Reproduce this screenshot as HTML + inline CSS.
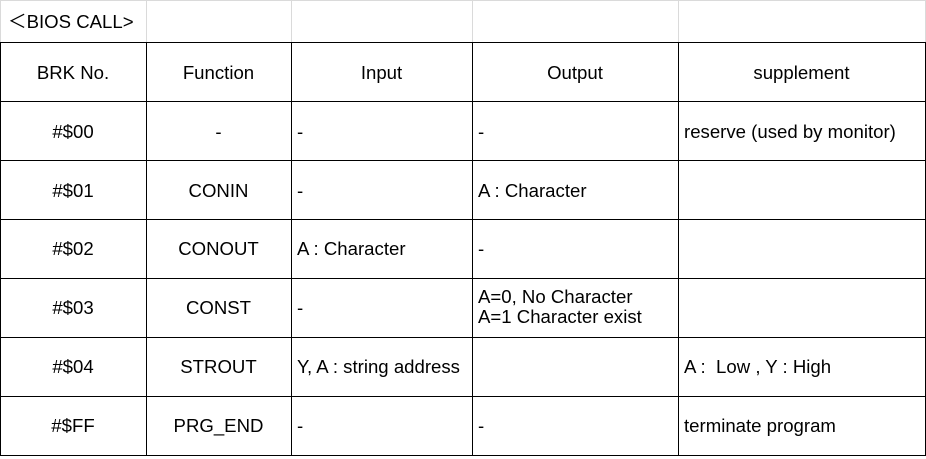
<!DOCTYPE html>
<html><head><meta charset="utf-8"><style>
body{margin:0;width:926px;height:459px;background:#fff;position:relative;overflow:hidden;font-family:"Liberation Sans","Noto Sans CJK JP",sans-serif;font-size:18.6px;color:#000}
.h{position:absolute;height:1px;background:#000}
.v{position:absolute;width:1px;background:#000}
.g{background:#dadada}
.t{position:absolute;line-height:21px;white-space:nowrap}
.c{text-align:center}
</style></head><body>
<div class="v g" style="left:0;top:0;height:43px"></div>
<div class="v g" style="left:146px;top:0;height:43px"></div>
<div class="v g" style="left:291px;top:0;height:43px"></div>
<div class="v g" style="left:472px;top:0;height:43px"></div>
<div class="v g" style="left:678px;top:0;height:43px"></div>
<div class="v g" style="left:925px;top:0;height:43px"></div>
<div class="h g" style="left:0;top:0;width:926px"></div>
<div class="h" style="left:0;top:42px;width:926px"></div>
<div class="h" style="left:0;top:101px;width:926px"></div>
<div class="h" style="left:0;top:160px;width:926px"></div>
<div class="h" style="left:0;top:219px;width:926px"></div>
<div class="h" style="left:0;top:278px;width:926px"></div>
<div class="h" style="left:0;top:337px;width:926px"></div>
<div class="h" style="left:0;top:396px;width:926px"></div>
<div class="h" style="left:0;top:455px;width:926px"></div>
<div class="v" style="left:0;top:42px;height:414px"></div>
<div class="v" style="left:146px;top:42px;height:414px"></div>
<div class="v" style="left:291px;top:42px;height:414px"></div>
<div class="v" style="left:472px;top:42px;height:414px"></div>
<div class="v" style="left:678px;top:42px;height:414px"></div>
<div class="v" style="left:925px;top:42px;height:414px"></div>
<div class="t" style="left:8px;top:11px">＜BIOS CALL&gt;</div>

<div class="t c" style="left:0;width:146px;top:62px">BRK No.</div>
<div class="t c" style="left:146px;width:145px;top:62px">Function</div>
<div class="t c" style="left:291px;width:181px;top:62px">Input</div>
<div class="t c" style="left:472px;width:206px;top:62px">Output</div>
<div class="t c" style="left:678px;width:247px;top:62px">supplement</div>

<div class="t c" style="left:0;width:146px;top:121px">#$00</div>
<div class="t c" style="left:146px;width:145px;top:121px">-</div>
<div class="t" style="left:297px;top:121px">-</div>
<div class="t" style="left:478px;top:121px">-</div>
<div class="t" style="left:684px;top:121px">reserve (used by monitor)</div>

<div class="t c" style="left:0;width:146px;top:180px">#$01</div>
<div class="t c" style="left:146px;width:145px;top:180px">CONIN</div>
<div class="t" style="left:297px;top:180px">-</div>
<div class="t" style="left:478px;top:180px">A : Character</div>

<div class="t c" style="left:0;width:146px;top:238px">#$02</div>
<div class="t c" style="left:146px;width:145px;top:238px">CONOUT</div>
<div class="t" style="left:297px;top:238px">A : Character</div>
<div class="t" style="left:478px;top:238px">-</div>

<div class="t c" style="left:0;width:146px;top:297px">#$03</div>
<div class="t c" style="left:146px;width:145px;top:297px">CONST</div>
<div class="t" style="left:297px;top:297px">-</div>
<div class="t" style="left:478px;top:287px;line-height:20px">A=0, No Character<br>A=1 Character exist</div>

<div class="t c" style="left:0;width:146px;top:356px">#$04</div>
<div class="t c" style="left:146px;width:145px;top:356px">STROUT</div>
<div class="t" style="left:297px;top:356px">Y, A : string address</div>
<div class="t" style="left:684px;top:356px">A :&nbsp; Low , Y : High</div>

<div class="t c" style="left:0;width:146px;top:415px">#$FF</div>
<div class="t c" style="left:146px;width:145px;top:415px">PRG_END</div>
<div class="t" style="left:297px;top:415px">-</div>
<div class="t" style="left:478px;top:415px">-</div>
<div class="t" style="left:684px;top:415px">terminate program</div>
</body></html>
